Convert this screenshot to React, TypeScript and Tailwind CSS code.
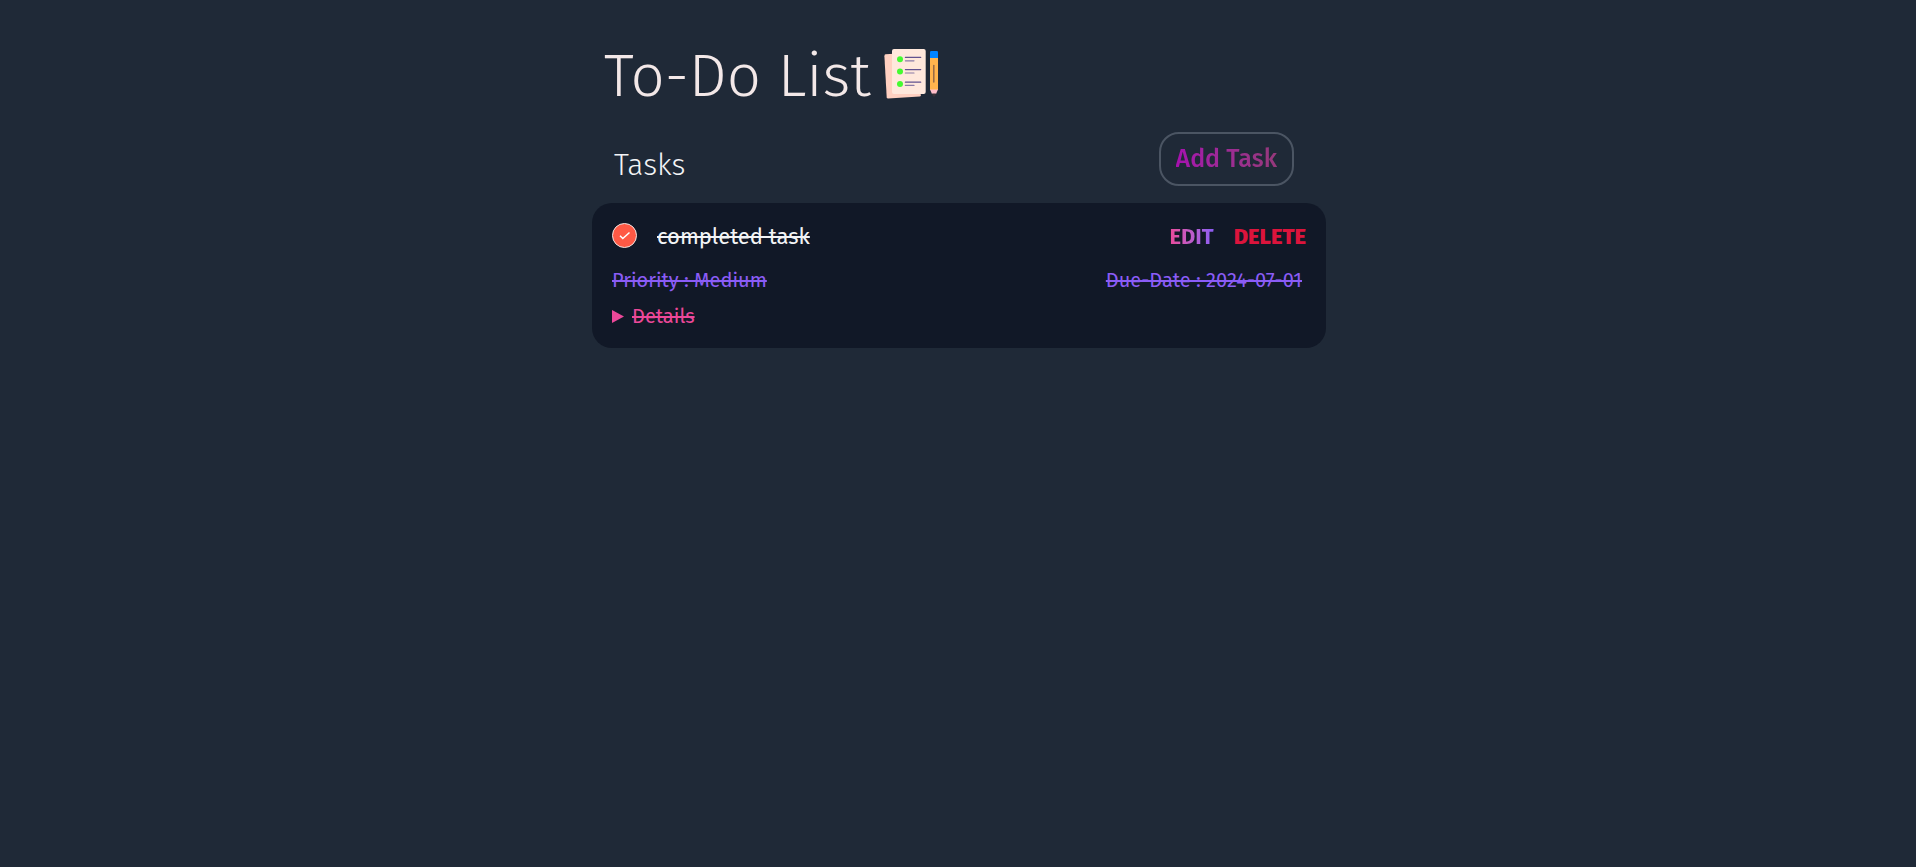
import { useState } from "react";

function NotesIcon() {
  return (
    <svg viewBox="0 0 56 52" className="mt-2 h-[52px] w-14 shrink-0" aria-hidden="true">
      <path d="M2.5 6.3 34 4.5 37.8 47.2Q37.8 48.4 36.6 48.5L5.2 50.6Q3.8 50.6 3.7 49.2L1.4 8.2Q1.4 6.4 2.5 6.3Z" fill="#ffd0c1" />
      <rect x="9" y="1" width="33.7" height="45" rx="2" fill="#ffe8dc" />
      <g fill="#45fb30">
        <circle cx="17" cy="11.2" r="3" />
        <circle cx="17" cy="23.5" r="3" />
        <circle cx="17" cy="36" r="3" />
      </g>
      <g stroke="#62528f" strokeWidth="1.2" strokeLinecap="round">
        <path d="M22.4 9.4H37.7M22.4 21.6H37.7M22.4 34.2H37.7" />
        <path d="M22.4 12.8H31M22.4 25H31M22.4 37.4H31" stroke="#8a7ba6" />
      </g>
      <path d="M47 9H55V42H47Z" fill="#ffb44d" />
      <path d="M47 4.2Q47 3 48.2 3H53.8Q55 3 55 4.2V10H47Z" fill="#0084ff" />
      <path d="M50.8 17.5V34" stroke="#8d6344" strokeWidth="1.4" strokeLinecap="round" />
      <path d="M47 41.5H55L53 46H49Z" fill="#ffbdc9" />
      <path d="M49 45.5H53Q52.3 48.8 51 48.8T49 45.5Z" fill="#3a3037" />
    </svg>
  );
}

export default function App() {
  const [done, setDone] = useState(true);
  const strike = done ? "line-through" : "";

  return (
    <div className="min-h-screen bg-[#1f2937] font-['Fira_Sans','Noto_Sans',sans-serif]">
      <main className="mx-auto w-full max-w-[736px] pt-10 pl-0.5">
        <h1 className="flex items-start gap-3 pl-3 text-6xl leading-[72px] font-light text-[#f3e8e8]">
          To-Do List
          <NotesIcon />
        </h1>

        <div className="mt-5 flex items-start justify-between pr-8 pl-[22px]">
          <h2 className="pt-3 text-3xl leading-[42px] font-light text-gray-100">Tasks</h2>
          <button
            type="button"
            className="h-[54px] rounded-[20px] border-2 border-[#4b5563] px-[15px] text-[25px] leading-8 font-medium"
          >
            <span className="bg-gradient-to-r from-[#a60fae] to-[#95387b] bg-clip-text text-transparent">Add Task</span>
          </button>
        </div>

        <ul className="mt-[17px]">
          <li className="rounded-[20px] bg-[#111827] px-5 pt-[18px] pb-[14px]">
            <div className="flex items-start">
              <label className="flex items-start gap-5 text-[22px] leading-8 text-gray-100">
                <input
                  type="checkbox"
                  checked={done}
                  onChange={() => setDone(!done)}
                  className="peer sr-only"
                />
                <svg viewBox="0 0 25 25" className="mt-0.5 h-[25px] w-[25px]" aria-hidden="true">
                  <circle cx="12.5" cy="12.5" r="12" fill={done ? "#ff5945" : "none"} stroke="#f1e5e2" />
                  {done && <path d="M8 12.7 10.8 15.5 17.5 9.5" fill="none" stroke="white" strokeWidth="1.5" />}
                </svg>
                <span className={strike}>completed task</span>
              </label>
              <div className="ml-auto flex gap-5 text-[22px] leading-8">
                <button type="button" className="bg-gradient-to-r from-[#ec4899] to-[#8b5cf6] bg-clip-text font-bold text-transparent">
                  EDIT
                </button>
                <button type="button" className="font-extrabold text-[#dc143c]">DELETE</button>
              </div>
            </div>
            <div className="mt-[9px] flex justify-between pr-1 text-xl leading-9 text-[#8b5cf6]">
              <span className={strike}>Priority : Medium</span>
              <span className={strike}>Due-Date : 2024-07-01</span>
            </div>
            <details className="text-xl leading-9 text-[#ec4899]">
              <summary className="flex list-none items-center gap-2">
                <svg viewBox="0 0 12 13" className="h-[13px] w-3" aria-hidden="true">
                  <path d="M0 0 12 6.5 0 13Z" fill="currentColor" />
                </svg>
                <span className={strike}>Details</span>
              </summary>
            </details>
          </li>
        </ul>
      </main>
    </div>
  );
}
